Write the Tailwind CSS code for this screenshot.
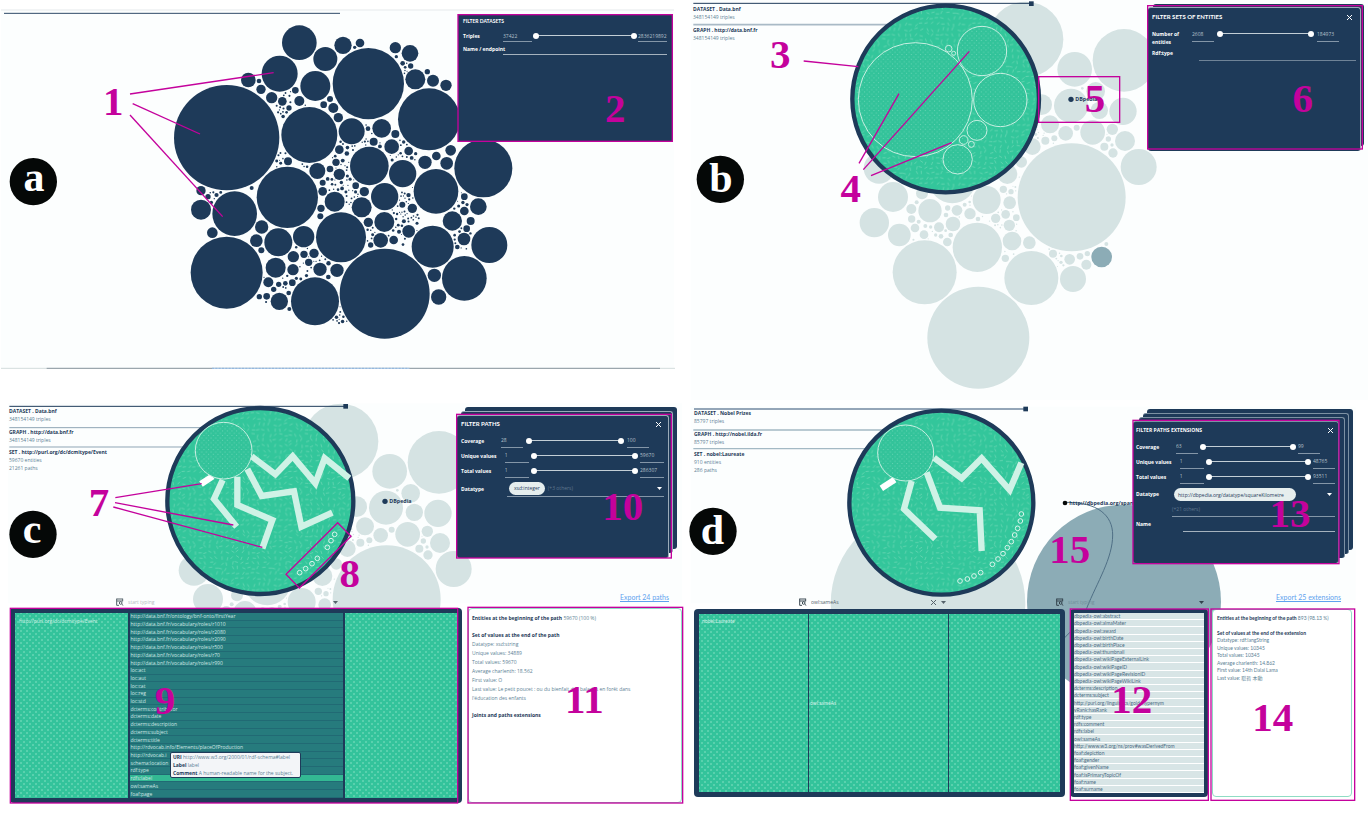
<!DOCTYPE html>
<html lang="en">
  <head>
    <meta charset="UTF-8" />
    <meta name="viewport" content="width=device-width, initial-scale=1.0" />
    <title>Linked data browser</title>
    <script src="https://cdn.jsdelivr.net/npm/@tailwindcss/browser@4"></script>
    <style>
      body {
        font-family: "Open Sans", "Noto Sans CJK JP", sans-serif;
      }

      .dots {
        background-color: #33c39b;
        background-image: radial-gradient(#74dabb 0.5px, transparent 1px),
          radial-gradient(#74dabb 0.5px, transparent 1px);
        background-size: 6px 6px;
        background-position: 0 0, 3px 3px;
      }

      /* two range inputs share one track */
      .slider {
        position: relative;
        height: 6px;
      }
      .slider::before {
        content: "";
        position: absolute;
        left: 3px;
        right: 3px;
        top: 2px;
        height: 1px;
        background: #c3ced6;
      }
      .slider input {
        appearance: none;
        position: absolute;
        left: 0;
        top: 0;
        width: 100%;
        height: 6px;
        background: transparent;
        pointer-events: none;
      }
      .slider input::-webkit-slider-thumb {
        appearance: none;
        width: 6px;
        height: 6px;
        border-radius: 50%;
        background: #fff;
        pointer-events: auto;
      }

      .mark text {
        font: bold 123px "Liberation Serif", serif;
        fill: #c4029c;
        text-anchor: middle;
      }
      .mark line,
      .mark rect,
      .mark polygon {
        fill: none;
        stroke: #c4029c;
        stroke-width: 4;
      }
      .mark text.letter {
        fill: #fff;
        font-size: 126px;
      }
    </style>
  </head>

  <body class="bg-white text-[5px] leading-[8px] text-[#1e3a59]">
    <main class="grid grid-cols-2 overflow-hidden">
      <!-- a: all datasets -->
      <section class="relative min-h-[400px]">
        <svg class="absolute top-0 left-0 w-full" viewBox="0 0 2052 1200">
          <rect x="3" y="30" width="2019" height="1074" fill="#fcfefe" />
          <path d="M3 30H2022" stroke="#eef1f2" stroke-width="5" />
          <path d="M12 40H1020" stroke="#2e4a68" stroke-width="3" />
          <path d="M3 1105H2025" stroke="#d3dddd" stroke-width="3" />
          <path d="M140 1105H1980" stroke="#8e9ba3" stroke-width="3" />
          <path d="M636 1105H1228" stroke="#b9d5f2" stroke-width="3" />
          <path d="M636 1105H1228" stroke="#8fb4dc" stroke-width="3" stroke-dasharray="6 4" />
          <g id="datasets" fill="#1e3a59"></g>
        </svg>
        <div class="relative flex justify-end pt-[14px] pr-[12px]">
          <form class="h-[127px] w-[214px] bg-[#1e3a59] px-[5px] pt-[3px] font-bold text-white">
            <h2 class="font-[Lato]">FILTER DATASETS</h2>
            <div class="mt-[5px] flex items-center gap-[1px]">
              <label for="a-min" class="w-[39px]">Triples</label>
              <input id="a-min" value="37422" class="h-[12px] w-[29px] border-b border-[#8496a8] font-normal text-[#b4c0cb]" />
              <div class="slider flex-1">
                <input type="range" value="0" aria-label="Minimum triples" />
                <input type="range" value="100" aria-label="Maximum triples" />
              </div>
              <input value="2836219892" aria-label="Maximum" class="h-[12px] w-[29px] border-b border-[#8496a8] font-normal text-[#b4c0cb]" />
            </div>
            <div class="mt-[1px] flex items-center gap-[1px]">
              <label for="a-name" class="w-[39px] whitespace-nowrap">Name / endpoint</label>
              <input id="a-name" class="h-[12px] min-w-0 flex-1 border-b border-[#a5b2be] font-normal" />
            </div>
          </form>
        </div>
        <svg class="mark pointer-events-none absolute top-0 left-0 w-full" viewBox="0 0 2052 1200">
          <line x1="390" y1="282" x2="821" y2="218" />
          <line x1="398" y1="311" x2="600" y2="402" />
          <line x1="390" y1="345" x2="668" y2="650" />
          <rect x="1374" y="44" width="643" height="380" />
          <text x="340" y="345">1</text>
          <text x="1846" y="367">2</text>
          <circle cx="100" cy="545" r="71" fill="#050807" />
          <text class="letter" x="102" y="572">a</text>
        </svg>
      </section>

      <!-- b: sets of entities of one dataset -->
      <section class="relative min-h-[400px]">
        <svg class="absolute top-0 left-0 w-full" viewBox="0 0 2052 1200">
          <defs>
            <pattern id="dash" width="160" height="160" patternUnits="userSpaceOnUse"></pattern>
            <pattern id="dot" width="14" height="14" patternUnits="userSpaceOnUse">
              <rect width="14" height="14" fill="#33c39a" />
              <circle cx="3" cy="3" r="1.5" fill="#7ddcbf" />
              <circle cx="10" cy="10" r="1.5" fill="#7ddcbf" />
            </pattern>
          </defs>
          <rect x="20" width="2032" height="1200" fill="#fcfefe" />
          <g id="neighbours" fill="#d5e3e3"></g>
          <circle cx="1253" cy="771" r="31" fill="#8cacb6" />
          <path d="M28 74H640" stroke="#a9bac6" stroke-width="5" />
          <path d="M28 10H1040" stroke="#1e3a59" stroke-width="3" />
          <rect x="1035" y="4" width="14" height="14" fill="#1e3a59" />
          <circle cx="785" cy="297" r="280" fill="url(#dash)" stroke="#1e3a59" stroke-width="13" />
          <g fill="url(#dot)" stroke="#c8efe2" stroke-width="3">
            <circle cx="694" cy="299" r="171" />
            <circle cx="894" cy="153" r="74" />
            <circle cx="949" cy="300" r="80" />
            <circle cx="879" cy="391" r="30" />
            <circle cx="821" cy="478" r="44" />
            <circle cx="794" cy="146" r="10" />
            <circle cx="809" cy="160" r="6" />
            <circle cx="839" cy="420" r="13" />
            <circle cx="862" cy="433" r="9" />
          </g>
          <circle cx="1161" cy="298" r="8" fill="#1e3a59" />
          <text x="1174" y="304" font-size="16" font-weight="bold" fill="#1e3a59">DBpedia</text>
        </svg>
        <div class="relative flex justify-between pt-[5px] pr-[4px] pl-[9px]">
          <div>
            <h2 class="font-bold">DATASET . Data.bnf</h2>
            <p class="text-[#5c7f95]">348154149 triples</p>
            <h2 class="mt-[5px] font-bold">GRAPH . http://data.bnf.fr</h2>
            <p class="text-[#5c7f95]">348154149 triples</p>
          </div>
          <div class="relative pt-[2px] pr-[3px]">
            <div class="absolute top-[-1px] right-0 h-[142px] w-[211px] rounded-[3px] bg-[#1e3a59]"></div>
            <form class="relative h-[144px] w-[213px] rounded-[3px] border-t border-r border-[#9aabb9] bg-[#1e3a59] px-[4px] pt-[5px] font-bold text-white">
              <div class="flex justify-between">
                <h2 class="font-[Lato] text-[6px]">FILTER SETS OF ENTITIES</h2>
                <button type="button" aria-label="Close" class="mr-[3px]">
                  <svg class="size-[7px]" viewBox="0 0 7 7" stroke="#fff"><path d="M1 1L6 6M6 1L1 6" /></svg>
                </button>
              </div>
              <div class="mt-[5px] flex items-start gap-[3px]">
                <label for="b-min" class="mt-[4px] w-[37px]">Number of entities</label>
                <input id="b-min" value="2608" class="h-[16px] w-[22px] border-b border-[#8496a8] font-normal text-[#b4c0cb]" />
                <div class="slider mt-[5px] w-[97px]">
                  <input type="range" value="0" aria-label="Minimum entities" />
                  <input type="range" value="100" aria-label="Maximum entities" />
                </div>
                <input value="184973" aria-label="Maximum" class="h-[16px] w-[22px] border-b border-[#8496a8] font-normal text-[#b4c0cb]" />
              </div>
              <div class="mt-[2px] flex gap-[3px]">
                <label for="b-type" class="w-[44px] pt-[1px]">Rdf:type</label>
                <input id="b-type" class="h-[13px] w-[157px] border-b border-[#6f8397] font-normal" />
              </div>
            </form>
          </div>
        </div>
        <svg class="mark pointer-events-none absolute top-0 left-0 w-full" viewBox="0 0 2052 1200">
          <line x1="359" y1="183" x2="523" y2="200" />
          <line x1="645" y1="281" x2="525" y2="490" />
          <line x1="856" y1="154" x2="538" y2="509" />
          <line x1="803" y1="428" x2="561" y2="527" />
          <rect x="1064" y="230" width="243" height="137" />
          <rect x="1391" y="17" width="644" height="430" />
          <text x="289" y="204">3</text>
          <text x="500" y="607">4</text>
          <text x="1233" y="335">5</text>
          <text x="1856" y="335">6</text>
          <circle cx="109" cy="538" r="71" fill="#050807" />
          <text class="letter" x="111" y="577">b</text>
        </svg>
      </section>

      <!-- c: paths of one set -->
      <section class="relative min-h-[414px]">
        <svg class="absolute top-0 left-0 w-full" viewBox="0 0 2052 1242">
          <rect x="24" y="10" width="2022" height="600" fill="#fcfefe" />
          <use href="#neighbours" x="-3" y="6" />
          <g transform="translate(0 -15)">
            <path d="M28 98H640M28 156H640" stroke="#8fa5b5" stroke-width="3" />
            <path d="M28 34H1036" stroke="#1e3a59" stroke-width="3" />
            <rect x="1030" y="27" width="14" height="14" fill="#1e3a59" />
            <circle cx="781" cy="318" r="279" fill="url(#dash)" stroke="#1e3a59" stroke-width="13" />
            <g fill="none" stroke="#cff2e6" stroke-width="19">
              <path d="M668 255L642 312L710 395" />
              <path d="M712 245V330L817 375L787 460" />
              <path d="M742 222L785 303L882 289L904 395L997 353" />
              <path d="M755 184L826 238L878 184L946 265L974 190L1048 250" />
              <path d="M603 267L638 244" stroke="#fff" />
            </g>
            <circle cx="671" cy="167" r="85" fill="url(#dot)" stroke="#c8efe2" stroke-width="3" />
            <g fill="none" stroke="#d9f5ec" stroke-width="3">
              <circle cx="1004" cy="418" r="7" />
              <circle cx="993" cy="437" r="7" />
              <circle cx="982" cy="457" r="7" />
              <circle cx="952" cy="490" r="7" />
              <circle cx="936" cy="506" r="7" />
              <circle cx="917" cy="521" r="7" />
              <circle cx="899" cy="533" r="7" />
            </g>
            <circle cx="1155" cy="319" r="8" fill="#1e3a59" />
            <text x="1168" y="325" font-size="16" font-weight="bold" fill="#1e3a59">DBpedia</text>
          </g>
        </svg>
        <div class="relative flex h-[192px] justify-between pt-[7px] pr-[7px] pl-[9px]">
          <div>
            <h2 class="font-bold">DATASET . Data.bnf</h2>
            <p class="text-[#5c7f95]">348154149 triples</p>
            <h2 class="mt-[5px] font-bold">GRAPH . http://data.bnf.fr</h2>
            <p class="text-[#5c7f95]">348154149 triples</p>
            <h2 class="mt-[4px] font-bold">SET . http://purl.org/dc/dcmitype/Event</h2>
            <p class="text-[#5c7f95]">59670 entities</p>
            <p class="text-[#5c7f95]">21261 paths</p>
          </div>
          <div class="relative pt-[8px] pr-[8px]">
            <div class="absolute top-0 right-0 h-[142px] w-[212px] rounded-[3px] bg-[#1e3a59]"></div>
            <div class="absolute top-[4px] right-[4px] h-[142px] w-[212px] rounded-[3px] border-t border-r border-[#9aabb9] bg-[#1e3a59]"></div>
            <form class="relative h-[143px] w-[212px] rounded-[3px] border-t border-r border-[#9aabb9] bg-[#1e3a59] px-[4px] pt-[4px] font-bold text-white">
              <div class="flex justify-between">
                <h2 class="font-[Lato] text-[6px]">FILTER PATHS</h2>
                <button type="button" aria-label="Close" class="mr-[2px]">
                  <svg class="size-[7px]" viewBox="0 0 7 7" stroke="#fff"><path d="M1 1L6 6M6 1L1 6" /></svg>
                </button>
              </div>
              <div class="mt-[5px] flex h-[15px] items-center gap-[3px]">
                <label for="c-cov" class="w-[37px]">Coverage</label>
                <input id="c-cov" value="28" class="h-[15px] w-[22px] border-b border-[#8496a8] font-normal text-[#b4c0cb]" />
                <div class="slider w-[98px]">
                  <input type="range" value="0" aria-label="Minimum coverage" />
                  <input type="range" value="100" aria-label="Maximum coverage" />
                </div>
                <input value="100" aria-label="Maximum" class="h-[15px] w-[22px] border-b border-[#8496a8] font-normal text-[#b4c0cb]" />
              </div>
              <div class="flex h-[15px] items-center gap-[2px]">
                <label for="c-uni" class="w-[42px]">Unique values</label>
                <input id="c-uni" value="1" class="h-[15px] w-[24px] border-b border-[#8496a8] font-normal text-[#b4c0cb]" />
                <div class="slider w-[108px]">
                  <input type="range" value="0" aria-label="Minimum unique values" />
                  <input type="range" value="100" aria-label="Maximum unique values" />
                </div>
                <input value="59670" aria-label="Maximum" class="h-[15px] w-[24px] border-b border-[#8496a8] font-normal text-[#b4c0cb]" />
              </div>
              <div class="flex h-[15px] items-center gap-[2px]">
                <label for="c-tot" class="w-[42px]">Total values</label>
                <input id="c-tot" value="1" class="h-[15px] w-[24px] border-b border-[#8496a8] font-normal text-[#b4c0cb]" />
                <div class="slider w-[108px]">
                  <input type="range" value="0" aria-label="Minimum total values" />
                  <input type="range" value="100" aria-label="Maximum total values" />
                </div>
                <input value="286307" aria-label="Maximum" class="h-[15px] w-[24px] border-b border-[#8496a8] font-normal text-[#b4c0cb]" />
              </div>
              <div class="mt-[2px] flex items-center">
                <span class="w-[46px]">Datatype</span>
                <div class="flex h-[17px] w-[157px] items-center gap-[3px] border-b border-[#8496a8] px-[2px] font-normal">
                  <button type="button" class="h-[13px] rounded-full bg-[#e6eeee] px-[5px] text-[#1e3a59]">xsd:integer</button>
                  <span class="flex-1 text-[#60778e]">(+3 others)</span>
                  <svg class="size-[5px]" viewBox="0 0 5 5" fill="#fff"><path d="M0 1H5L2.5 4Z" /></svg>
                </div>
              </div>
            </form>
          </div>
        </div>
        <div class="relative flex h-[16px] items-start justify-between pr-[15px] pl-[116px]">
          <div class="flex w-[222px] items-center gap-[4px] pt-[6px]">
            <svg class="size-[8px]" viewBox="0 0 24 24" fill="none" stroke="#55636b" stroke-width="3">
              <path d="M2 3H20M2 9H20M2 2V22H9M20 2V10" /><circle cx="14" cy="15" r="4" /><path d="M17 18L22 23" />
            </svg>
            <input placeholder="start typing" aria-label="Path" class="h-[8px] flex-1 placeholder:text-[#b3bcc0]" />
            <svg class="size-[5px]" viewBox="0 0 5 5" fill="#55636b"><path d="M0 1H5L2.5 4Z" /></svg>
          </div>
          <a href="#" class="font-[Lato] text-[7px] leading-[10px] text-[#5fa3ee] underline">Export 24 paths</a>
        </div>
        <div class="relative flex h-[195px] gap-[6px] pr-[2px] pl-[10px]">
          <div class="grid flex-1 grid-cols-[1fr_213px_1fr] gap-[2px] rounded-[4px] bg-[#1e3a59] p-[5px] text-[#d5f1e8]">
            <div class="dots px-[4px] pt-[4px]">http://purl.org/dc/dcmitype/Event</div>
            <ul class="flex flex-col text-[#cfe6e4] *:flex *:flex-1 *:items-center *:border-b *:border-[#216a74] *:bg-[#267b7d] *:pl-[1px] *:leading-[6px]">
              <li>http://data.bnf.fr/ontology/bnf-onto/firstYear</li>
              <li>http://data.bnf.fr/vocabulary/roles/r1010</li>
              <li>http://data.bnf.fr/vocabulary/roles/r2080</li>
              <li>http://data.bnf.fr/vocabulary/roles/r2090</li>
              <li>http://data.bnf.fr/vocabulary/roles/r500</li>
              <li>http://data.bnf.fr/vocabulary/roles/r70</li>
              <li>http://data.bnf.fr/vocabulary/roles/r990</li>
              <li>loc:act</li>
              <li>loc:aut</li>
              <li>loc:cat</li>
              <li>loc:reg</li>
              <li>loc:std</li>
              <li>dcterms:contributor</li>
              <li>dcterms:date</li>
              <li>dcterms:description</li>
              <li>dcterms:subject</li>
              <li>dcterms:title</li>
              <li>http://rdvocab.info/Elements/placeOfProduction</li>
              <li>http://rdvocab.i</li>
              <li>schema:location</li>
              <li>rdf:type</li>
              <li class="bg-[#33b993]!">rdfs:label</li>
              <li>owl:sameAs</li>
              <li>foaf:page</li>
            </ul>
            <div class="dots"></div>
          </div>
          <div class="w-[214px] rounded-[4px] border border-[#8fdcc4] bg-white px-[3px] pt-[5px] leading-[9px] text-[#5c7f95]">
            <p><b class="text-[#1e3a59]">Entities at the beginning of the path</b> 59670 (100 %)</p>
            <h3 class="mt-[8px] font-bold text-[#1e3a59]">Set of values at the end of the path</h3>
            <p>Datatype: xsd:string</p>
            <p>Unique values: 34889</p>
            <p>Total values: 59670</p>
            <p>Average charlenth: 18.562</p>
            <p>First value: O</p>
            <p>Last value: Le petit poucet : ou du bienfait des balades en forêt dans<br />l'éducation des enfants</p>
            <h3 class="mt-[8px] font-bold text-[#1e3a59]">Joints and paths extensions</h3>
          </div>
          <div role="tooltip" class="absolute top-[144px] left-[170px] w-[131px] rounded-[2px] border border-[#1e3a59] bg-[#f3f5f8] px-[2px] text-[#5c7f95]">
            <p><b class="text-[#1e3a59]">URI</b> http://www.w3.org/2000/01/rdf-schema#label</p>
            <p><b class="text-[#1e3a59]">Label</b> label</p>
            <p class="whitespace-nowrap"><b class="text-[#1e3a59]">Comment</b> A human-readable name for the subject.</p>
          </div>
        </div>
        <svg class="mark pointer-events-none absolute top-0 left-0 w-full" viewBox="0 0 2052 1242">
          <line x1="346" y1="293" x2="605" y2="251" />
          <line x1="345" y1="308" x2="700" y2="375" />
          <line x1="340" y1="321" x2="787" y2="442" />
          <polygon points="1013,368 1053,409 898,564 858,523" />
          <rect x="1370" y="43" width="644" height="431" />
          <rect x="31" y="625" width="1342" height="584" />
          <rect x="1404" y="622" width="644" height="587" />
          <text x="297" y="349">7</text>
          <text x="1049" y="560">8</text>
          <text x="495" y="943">9</text>
          <text x="1868" y="361">10</text>
          <text x="1753" y="940">11</text>
          <circle cx="99" cy="403" r="71" fill="#050807" />
          <text class="letter" x="96" y="430">c</text>
        </svg>
      </section>

      <!-- d: paths extended in another dataset -->
      <section class="relative min-h-[414px]">
        <svg class="absolute top-0 left-0 w-full" viewBox="0 0 2052 1242">
          <rect x="20" y="20" width="1995" height="590" fill="#fcfefe" />
          <g transform="translate(0 -15)">
            <circle cx="732" cy="627" r="292" fill="#d5e3e3" />
            <circle cx="1320" cy="620" r="291" fill="#8cacb6" />
            <path d="M28 105H640M28 161H640" stroke="#a3b9c4" stroke-width="4" />
            <path d="M30 42H1024" stroke="#7388a0" stroke-width="5" />
            <rect x="1018" y="35" width="14" height="14" fill="#1e3a59" />
            <circle cx="772" cy="323" r="276" fill="url(#dash)" stroke="#1e3a59" stroke-width="13" />
            <g fill="none" stroke="#cff2e6" stroke-width="19">
              <path d="M683 258L660 342L754 432" />
              <path d="M728 232L768 338L887 346L893 468" />
              <path d="M750 188L833 250L893 190L977 285L1012 203" />
              <path d="M592 280L632 254" stroke="#fff" />
            </g>
            <circle cx="665" cy="174" r="84" fill="url(#dot)" stroke="#c8efe2" stroke-width="3" />
            <g fill="none" stroke="#d9f5ec" stroke-width="3">
              <circle cx="1012" cy="357" r="7" />
              <circle cx="1009" cy="378" r="7" />
              <circle cx="1001" cy="400" r="7" />
              <circle cx="992" cy="420" r="7" />
              <circle cx="982" cy="440" r="7" />
              <circle cx="970" cy="458" r="7" />
              <circle cx="957" cy="476" r="7" />
              <circle cx="942" cy="492" r="7" />
              <circle cx="925" cy="508" r="7" />
              <circle cx="890" cy="533" r="7" />
              <circle cx="870" cy="543" r="7" />
              <circle cx="850" cy="552" r="7" />
              <circle cx="828" cy="558" r="7" />
            </g>
            <path d="M1148 322C1240 322 1286 360 1286 420C1286 490 1240 560 1208 640C1190 680 1170 700 1130 740" fill="none" stroke="#4f6f85" stroke-width="3" />
            <circle cx="1143" cy="324" r="7" fill="#050807" />
            <text x="1156" y="330" font-size="16" font-weight="bold" fill="#1e3a59">http://dbpedia.org/spani</text>
          </g>
        </svg>
        <div class="relative flex h-[192px] justify-between pt-[9px] pr-[15px] pl-[10px]">
          <div>
            <h2 class="font-bold">DATASET . Nobel Prizes</h2>
            <p class="text-[#5c7f95]">85797 triples</p>
            <h2 class="mt-[5px] font-bold">GRAPH . http://nobel.ilda.fr</h2>
            <p class="text-[#5c7f95]">85797 triples</p>
            <h2 class="mt-[4px] font-bold">SET . nobel:Laureate</h2>
            <p class="text-[#5c7f95]">910 entities</p>
            <p class="text-[#5c7f95]">286 paths</p>
          </div>
          <div class="relative pt-[12px] pr-[14px]">
            <div class="absolute top-0 right-0 h-[141px] w-[206px] rounded-[3px] bg-[#1e3a59]"></div>
            <div class="absolute top-[4px] right-[4px] h-[141px] w-[206px] rounded-[3px] border-t border-r border-[#7d91a3] bg-[#1e3a59]"></div>
            <div class="absolute top-[8px] right-[8px] h-[141px] w-[206px] rounded-[3px] border-t border-r border-[#7d91a3] bg-[#1e3a59]"></div>
            <form class="relative h-[142px] w-[206px] rounded-[3px] border-t border-r border-[#7d91a3] bg-[#1e3a59] px-[3px] pt-[4px] font-bold text-white">
              <div class="flex justify-between">
                <h2>FILTER PATHS EXTENSIONS</h2>
                <button type="button" aria-label="Close" class="mr-[1px]">
                  <svg class="size-[7px]" viewBox="0 0 7 7" stroke="#fff"><path d="M1 1L6 6M6 1L1 6" /></svg>
                </button>
              </div>
              <div class="mt-[5px] flex h-[15px] items-center gap-[2px]">
                <label for="d-cov" class="w-[38px]">Coverage</label>
                <input id="d-cov" value="63" class="h-[15px] w-[22px] border-b border-[#8496a8] font-normal text-[#b4c0cb]" />
                <div class="slider w-[96px]">
                  <input type="range" value="0" aria-label="Minimum coverage" />
                  <input type="range" value="100" aria-label="Maximum coverage" />
                </div>
                <input value="99" aria-label="Maximum" class="h-[15px] w-[22px] border-b border-[#8496a8] font-normal text-[#b4c0cb]" />
              </div>
              <div class="flex h-[15px] items-center gap-[2px]">
                <label for="d-uni" class="w-[42px]">Unique values</label>
                <input id="d-uni" value="1" class="h-[15px] w-[24px] border-b border-[#8496a8] font-normal text-[#b4c0cb]" />
                <div class="slider w-[106px]">
                  <input type="range" value="0" aria-label="Minimum unique values" />
                  <input type="range" value="100" aria-label="Maximum unique values" />
                </div>
                <input value="48765" aria-label="Maximum" class="h-[15px] w-[22px] border-b border-[#8496a8] font-normal text-[#b4c0cb]" />
              </div>
              <div class="flex h-[15px] items-center gap-[2px]">
                <label for="d-tot" class="w-[42px]">Total values</label>
                <input id="d-tot" value="1" class="h-[15px] w-[24px] border-b border-[#8496a8] font-normal text-[#b4c0cb]" />
                <div class="slider w-[106px]">
                  <input type="range" value="0" aria-label="Minimum total values" />
                  <input type="range" value="100" aria-label="Maximum total values" />
                </div>
                <input value="93511" aria-label="Maximum" class="h-[15px] w-[22px] border-b border-[#8496a8] font-normal text-[#b4c0cb]" />
              </div>
              <div class="mt-[4px] flex">
                <span class="w-[36px] pt-[2px]">Datatype</span>
                <div class="h-[29px] flex-1 border-b border-[#8496a8] font-normal">
                  <div class="flex items-center justify-between pr-[3px] pl-[2px]">
                    <button type="button" class="h-[13px] w-[122px] rounded-full bg-[#e6eeee] px-[4px] text-left whitespace-nowrap text-[#1e3a59]">http://dbpedia.org/datatype/squareKilometre</button>
                    <svg class="size-[5px]" viewBox="0 0 5 5" fill="#fff"><path d="M0 1H5L2.5 4Z" /></svg>
                  </div>
                  <p class="mt-[4px] text-[#60778e]">(+21 others)</p>
                </div>
              </div>
              <div class="mt-[3px] flex">
                <label for="d-name" class="w-[47px]">Name</label>
                <input id="d-name" class="h-[12px] min-w-0 flex-1 border-b border-[#a5b2be] font-normal" />
              </div>
            </form>
          </div>
        </div>
        <div class="relative flex h-[17px] items-start pr-[27px] pl-[115px]">
          <div class="flex w-[147px] items-center gap-[4px] pt-[6px]">
            <svg class="size-[8px]" viewBox="0 0 24 24" fill="none" stroke="#3f4d56" stroke-width="3">
              <path d="M2 3H20M2 9H20M2 2V22H9M20 2V10" /><circle cx="14" cy="15" r="4" /><path d="M17 18L22 23" />
            </svg>
            <input value="owl:sameAs" aria-label="Path" class="h-[8px] min-w-0 flex-1 text-[#55636b]" />
            <button type="button" aria-label="Clear">
              <svg class="size-[7px]" viewBox="0 0 7 7" stroke="#55636b"><path d="M1 1L6 6M6 1L1 6" /></svg>
            </button>
            <svg class="size-[5px]" viewBox="0 0 5 5" fill="#55636b"><path d="M0 1H5L2.5 4Z" /></svg>
          </div>
          <div class="ml-[110px] flex w-[148px] items-center gap-[4px] pt-[6px]">
            <svg class="size-[8px]" viewBox="0 0 24 24" fill="none" stroke="#33434d" stroke-width="3">
              <path d="M2 3H20M2 9H20M2 2V22H9M20 2V10" /><circle cx="14" cy="15" r="4" /><path d="M17 18L22 23" />
            </svg>
            <input placeholder="start typing" aria-label="Extension" class="h-[8px] min-w-0 flex-1 placeholder:text-[#708f9a]" />
            <svg class="size-[5px]" viewBox="0 0 5 5" fill="#33434d"><path d="M0 1H5L2.5 4Z" /></svg>
          </div>
          <a href="#" class="ml-auto font-[Lato] text-[7px] leading-[10px] whitespace-nowrap text-[#5fa3ee] underline">Export 25 extensions</a>
        </div>
        <div class="relative flex h-[188px] pr-[16px] pl-[10px] font-[Lato,'Noto_Sans_CJK_JP',sans-serif]">
          <div class="flex flex-1 gap-[1px] rounded-[4px] bg-[#1e3a59] p-[5px] text-[#d5f1e8]">
            <div class="dots w-[109px] px-[3px] pt-[3px]">nobel:Laureate</div>
            <div class="dots flex w-[139px] items-center px-[1px]">owl:sameAs</div>
            <div class="dots flex-1"></div>
          </div>
          <ul class="ml-[5px] flex w-[138px] flex-col rounded-[4px] border-[4px] border-[#1e3a59] bg-[#1e3a59] text-[#4b6c84] *:flex *:flex-1 *:items-center *:border-b *:border-white *:bg-[#d8e5e6] *:leading-[6px]">
            <li>dbpedia-owl:abstract</li>
            <li>dbpedia-owl:almaMater</li>
            <li>dbpedia-owl:award</li>
            <li>dbpedia-owl:birthDate</li>
            <li>dbpedia-owl:birthPlace</li>
            <li>dbpedia-owl:thumbnail</li>
            <li>dbpedia-owl:wikiPageExternalLink</li>
            <li>dbpedia-owl:wikiPageID</li>
            <li>dbpedia-owl:wikiPageRevisionID</li>
            <li>dbpedia-owl:wikiPageWikiLink</li>
            <li>dcterms:description</li>
            <li>dcterms:subject</li>
            <li>http://purl.org/linguistics/gold/hypernym</li>
            <li>vRank:hasRank</li>
            <li>rdf:type</li>
            <li>rdfs:comment</li>
            <li>rdfs:label</li>
            <li>owl:sameAs</li>
            <li>http://www.w3.org/ns/prov#wasDerivedFrom</li>
            <li>foaf:depiction</li>
            <li>foaf:gender</li>
            <li>foaf:givenName</li>
            <li>foaf:isPrimaryTopicOf</li>
            <li>foaf:name</li>
            <li>foaf:surname</li>
          </ul>
          <div class="ml-[4px] w-[140px] rounded-[4px] border border-[#8fdcc4] bg-white px-[4px] pt-[5px] leading-normal text-[#5c7f95]">
            <p class="whitespace-nowrap"><b class="text-[#1e3a59]">Entities at the beginning of the path</b> 893 (98.13 %)</p>
            <h3 class="mt-[7px] font-bold text-[#1e3a59]">Set of values at the end of the extension</h3>
            <p>Datatype: rdf:langString</p>
            <p>Unique values: 10345</p>
            <p>Total values: 10345</p>
            <p>Average charlenth: 14.862</p>
            <p>First value: 14th Dalai Lama</p>
            <p>Last value: 聡哲 本動</p>
          </div>
        </div>
        <svg class="mark pointer-events-none absolute top-0 left-0 w-full" viewBox="0 0 2052 1242">
          <rect x="1347" y="61" width="618" height="430" />
          <rect x="1159" y="627" width="414" height="574" />
          <rect x="1581" y="627" width="431" height="574" />
          <text x="1157" y="490">15</text>
          <text x="1818" y="380">13</text>
          <text x="1343" y="940">12</text>
          <text x="1766" y="992">14</text>
          <circle cx="87" cy="394" r="71" fill="#050807" />
          <text class="letter" x="85" y="432">d</text>
        </svg>
      </section>
    </main>

    <script>
      const NS = "http://www.w3.org/2000/svg";
      let seed = 7;
      const rnd = () => (seed = (seed * 16807) % 2147483647) / 2147483647;

      // [cx, cy, r]
      const datasets = [
        [898,128,52],[976,177,36],[1029,136,26],[1080,129,13],[839,221,54],[745,240,22],[946,258,45],[1105,251,107],
        [1186,143,17],[1230,160,25],[1246,238,30],[1299,242,18],[1338,256,17],[1282,215,8],[1208,190,7],[1232,198,8],[1189,170,5],
        [1287,358,93],[680,413,158],[928,405,84],[1055,394,39],[1145,385,28],[1186,402,12],[1175,440,22],[1121,425,12],[1104,386,7],
        [1226,453,13],[1108,498,58],[1208,521,41],[1275,487,20],[1309,468,13],[1352,451,16],[1340,490,19],[1308,574,67],
        [1154,590,41],[1085,622,30],[1153,666,30],[1105,667,14],[1142,721,22],[1181,720,13],[1226,694,19],[1237,625,14],[1207,614,9],
        [862,592,92],[952,513,24],[1004,605,30],[1018,523,17],[1008,487,11],[1018,449,13],[1093,575,14],[1067,557,10],
        [864,484,12],[603,629,30],[704,641,67],[637,698,16],[603,572,14],[624,590,8],[785,681,20],[769,722,19],[835,727,42],[911,710,32],
        [784,751,9],[1023,712,75],[680,818,108],[827,803,30],[880,770,17],[912,763,11],[942,760,14],[926,787,11],[879,809,17],
        [960,808,20],[1011,811,20],[805,847,15],[877,848,10],[836,853,8],[856,850,7],[821,868,8],[838,904,26],[800,889,10],
        [778,890,8],[945,904,72],[1154,881,135],[1298,740,63],[1303,826,20],[1316,891,23],[1450,505,87],[1435,620,25],
        [1357,663,29],[1393,633,13],[1412,663,12],[1468,735,54],[1392,717,19],[1400,686,10],[1393,835,67],[1393,590,10],
        [1372,741,7],[783,268,14],[815,293,17],[847,304,13],[898,303,15],[886,271,10],[971,314,10],[1000,324,15],[990,297,9],
        [1015,353,14],[968,574,13],[963,625,11],[961,649,9],[968,548,9],[990,507,10],[866,879,7],[868,927,6],[1112,735,8],[985,831,7],
        [777,243,7],[1064,142,5],[755,564,6],[867,324,8],[1247,461,5],
      ];
      const neighbours = [
        [1025,118,113],[1172,208,52],[1320,181,94],[1235,274,28],[1161,317,51],[1246,331,26],[1317,334,41],[1073,314,31],[1098,373,27],
        [1145,400,22],[1178,383,9],[1226,397,37],[1285,388,17],[1273,417,8],[1323,423,30],[1261,440,12],[1287,459,14],[1364,501,54],
        [1284,435,5],[1084,422,12],[1111,415,9],[1045,440,25],[1012,486,17],[1163,592,162],[970,522,30],[1267,732,6],[1207,794,15],
        [1167,837,39],[1188,769,10],[1210,761,8],[1157,778,16],[1107,761,12],[1042,834,81],[1131,787,5],[1132,768,4],
        [585,505,46],[627,591,45],[571,668,44],[646,705,34],[738,632,35],[682,627,15],[683,657,11],[693,684,13],[720,704,13],
        [765,682,15],[807,672,22],[819,631,16],[858,641,17],[790,726,13],[800,705,7],[722,817,96],[880,742,74],[883,1013,153],
        [908,600,42],[935,655,14],[977,608,19],[958,568,11],[981,575,8],[965,643,13],[997,653,10],[976,676,17],[984,723,28],
        [1036,728,19],[964,775,11],[714,580,18],[805,540,70],[882,657,7],[791,624,8],[786,645,7],[698,607,6],[704,665,6],
        [724,678,6],[740,681,5],[771,709,7],[755,705,5],[842,614,6],[857,606,4],[1195,265,4],
      ];
      // [cx, cy, spread, tries]
      const datasetGaps = [
        [845,335,32,70],[880,300,40,40],[950,310,50,30],[1000,480,60,140],[1040,560,55,150],[1215,580,35,90],[1215,650,42,110],
        [900,810,70,140],[950,760,40,45],[1100,420,50,90],[1225,450,45,50],[1025,945,26,50],[1380,610,35,50],
        [1375,710,40,60],[645,585,28,45],[1222,205,22,40],[1180,700,35,60],[1100,700,30,35],[850,480,24,25],[780,240,20,12],[905,495,25,22],
        [1190,475,40,40],[820,865,45,30],[1280,250,30,12],
      ];
      const neighbourGaps = [
        [860,600,60,60],[1000,570,45,90],[960,650,50,60],[740,690,60,60],[1080,410,30,50],[1280,430,30,30],[1120,770,30,40],[980,770,40,30],
      ];

      function drawCircle(parent, x, y, r) {
        const c = document.createElementNS(NS, "circle");
        c.setAttribute("cx", x);
        c.setAttribute("cy", y);
        c.setAttribute("r", r);
        parent.appendChild(c);
      }

      // small datasets are packed in the space left between the big ones
      function pack(id, list, gaps, max) {
        const all = list.slice();
        for (const [gx, gy, spread, tries] of gaps) {
          for (let i = 0; i < tries; i++) {
            const x = gx + (rnd() * 2 - 1) * spread;
            const y = gy + (rnd() * 2 - 1) * spread;
            const cap = 2 + rnd() * rnd() * max;
            let free = cap;
            for (const [cx, cy, r] of all) {
              free = Math.min(free, Math.hypot(cx - x, cy - y) - r - 3);
            }
            if (free >= 1.5) all.push([x, y, free]);
          }
        }
        const g = document.getElementById(id);
        all.forEach(([x, y, r]) => drawCircle(g, x, y, r));
      }
      pack("datasets", datasets, datasetGaps, 9);
      pack("neighbours", neighbours, neighbourGaps, 4);

      // random strokes for the dataset texture
      const tile = document.getElementById("dash");
      const back = document.createElementNS(NS, "rect");
      back.setAttribute("width", 160);
      back.setAttribute("height", 160);
      back.setAttribute("fill", "#33c69b");
      tile.appendChild(back);
      let d = "";
      for (let i = 0; i < 10; i++) {
        for (let j = 0; j < 10; j++) {
          const a = rnd() * Math.PI;
          const x = 8 + i * 16 + (rnd() - 0.5) * 8;
          const y = 8 + j * 16 + (rnd() - 0.5) * 8;
          const dx = Math.cos(a) * 5;
          const dy = Math.sin(a) * 5;
          d += `M${x - dx} ${y - dy}L${x + dx} ${y + dy}`;
        }
      }
      const strokes = document.createElementNS(NS, "path");
      strokes.setAttribute("d", d);
      strokes.setAttribute("stroke", "#68d5b2");
      strokes.setAttribute("stroke-width", 2.5);
      tile.appendChild(strokes);
    </script>
  </body>
</html>
